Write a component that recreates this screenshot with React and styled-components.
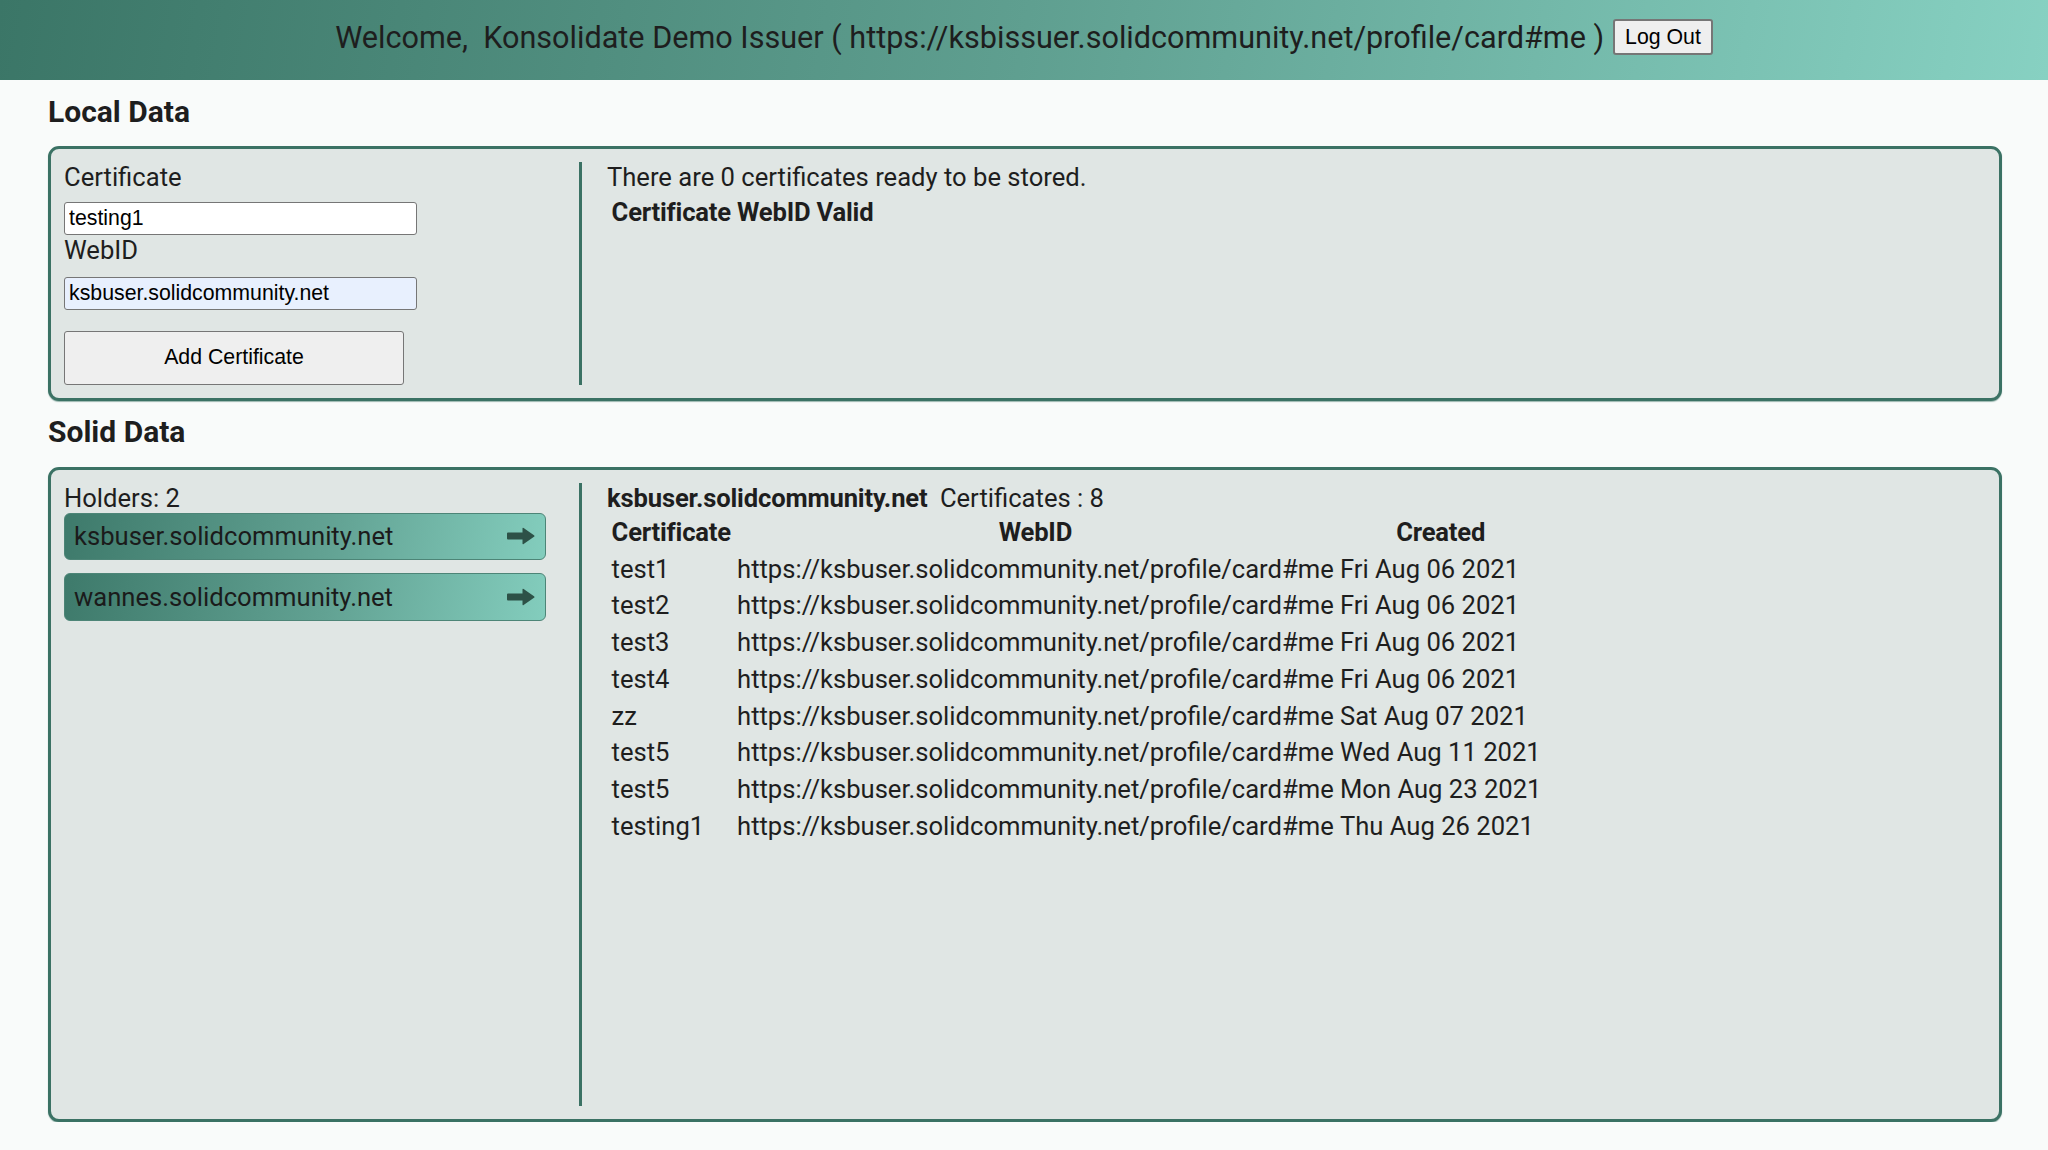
import React from "react";
import styled, { createGlobalStyle } from "styled-components";

const GlobalStyle = createGlobalStyle`
  body {
    margin: 0;
    background: #f9fbfa;
    color: #1e1e1e;
    font-family: Roboto, "Noto Sans", sans-serif;
    font-size: 25.6px;
  }
`;

const Header = styled.header`
  height: 80px;
  box-sizing: border-box;
  padding-bottom: 6px;
  display: flex;
  align-items: center;
  justify-content: center;
  gap: 9px;
  background: linear-gradient(100deg, #3b7667 0%, #5f9f90 50%, #87d1c2 100%);
`;

const Welcome = styled.span`
  font-size: 30.6px;
  white-space: pre;
`;

const NativeButton = styled.button`
  font-family: "Liberation Sans", Arial, sans-serif;
  font-size: 21.3px;
  color: #000;
  background: #efefef;
  border: 1.6px solid #767676;
  border-radius: 3px;
  box-sizing: border-box;
  cursor: pointer;
`;

const LogOut = styled(NativeButton)`
  height: 36px;
  padding: 0 10px;
  border-width: 2px;
`;

const Main = styled.main`
  padding: 0 46px 0 48px;
`;

const SectionTitle = styled.h3`
  margin: 13.5px 0 17.5px;
  font-size: 30px;
  line-height: 35px;
  font-weight: 700;
`;

const Panel = styled.section`
  display: flex;
  box-sizing: border-box;
  height: ${(p) => (p.$height ? `${p.$height}px` : "auto")};
  padding: 13px;
  background: #e0e6e4;
  border: 3px solid #3b7264;
  border-radius: 11px;
  box-shadow: 0 1px 1px rgba(59, 114, 100, 0.5);
`;

const LeftCol = styled.div`
  flex: 0 0 515px;
  border-right: 3px solid #3b7264;
`;

const RightCol = styled.div`
  flex: 1;
  padding-left: 25px;
`;

const Line = styled.div`
  line-height: 30px;
`;

const TextInput = styled.input`
  display: block;
  margin-top: ${(p) => p.$gap}px;
  width: 353px;
  height: 33px;
  box-sizing: border-box;
  padding: 1px 4px;
  font-family: "Liberation Sans", Arial, sans-serif;
  font-size: 21.3px;
  color: #000;
  background: ${(p) => (p.$filled ? "#e8f0fe" : "#fff")};
  border: 1.6px solid #767676;
  border-radius: 3px;
`;

const AddButton = styled(NativeButton)`
  display: block;
  margin-top: 21px;
  width: 340px;
  height: 54px;
`;

const Table = styled.table`
  border-spacing: 3.2px;
  font-size: 25.6px;
  color: #1e1e1e;

  th,
  td {
    padding: 1.6px;
    line-height: 30.5px;
    white-space: nowrap;
  }

  th {
    font-weight: 700;
    letter-spacing: -0.2px;
  }

  td {
    text-align: left;
  }
`;

const HolderList = styled.div`
  display: flex;
  flex-direction: column;
  gap: 13px;
  width: 482px;
`;

const HolderButton = styled.div`
  display: flex;
  align-items: center;
  justify-content: space-between;
  height: 47.5px;
  box-sizing: border-box;
  padding: 0 10px 0 9px;
  border: 1px solid #4d8577;
  border-radius: 6px;
  background: linear-gradient(100deg, #3e7a6b 0%, #62a293 55%, #83cdbd 100%);
  color: #1b1b1b;
  cursor: pointer;
`;

const ArrowIcon = styled.svg`
  width: 28px;
  height: 18px;
  flex: 0 0 auto;
  fill: #2d5147;
`;

const Arrow = () => (
  <ArrowIcon viewBox="0 0 28 18">
    <path d="M1 5.6 H15.5 V1.6 Q15.5 0.4 16.6 1 L27 8.2 Q28 9 27 9.8 L16.6 17 Q15.5 17.6 15.5 16.4 V12.4 H1 Q0 12.4 0 11.4 V6.6 Q0 5.6 1 5.6 Z" />
  </ArrowIcon>
);

const Bold = styled.span`
  font-weight: 700;
  letter-spacing: -0.15px;
  margin-right: 6px;
`;

const holders = ["ksbuser.solidcommunity.net", "wannes.solidcommunity.net"];

const webId = "https://ksbuser.solidcommunity.net/profile/card#me";

const certificates = [
  ["test1", "Fri Aug 06 2021"],
  ["test2", "Fri Aug 06 2021"],
  ["test3", "Fri Aug 06 2021"],
  ["test4", "Fri Aug 06 2021"],
  ["zz", "Sat Aug 07 2021"],
  ["test5", "Wed Aug 11 2021"],
  ["test5", "Mon Aug 23 2021"],
  ["testing1", "Thu Aug 26 2021"],
];

export default function App() {
  return (
    <>
      <GlobalStyle />
      <Header>
        <Welcome>
          {"Welcome,  Konsolidate Demo Issuer ( https://ksbissuer.solidcommunity.net/profile/card#me )"}
        </Welcome>
        <LogOut type="button">Log Out</LogOut>
      </Header>
      <Main>
        <SectionTitle>Local Data</SectionTitle>
        <Panel>
          <LeftCol>
            <Line>Certificate</Line>
            <TextInput $gap={9.5} defaultValue="testing1" />
            <Line>WebID</Line>
            <TextInput $gap={12} $filled defaultValue="ksbuser.solidcommunity.net" />
            <AddButton type="button">Add Certificate</AddButton>
          </LeftCol>
          <RightCol>
            <Line>There are 0 certificates ready to be stored.</Line>
            <Table>
              <thead>
                <tr>
                  <th>Certificate</th>
                  <th>WebID</th>
                  <th>Valid</th>
                </tr>
              </thead>
            </Table>
          </RightCol>
        </Panel>

        <SectionTitle>Solid Data</SectionTitle>
        <Panel $height={655}>
          <LeftCol>
            <Line>Holders: 2</Line>
            <HolderList>
              {holders.map((h) => (
                <HolderButton key={h}>
                  <span>{h}</span>
                  <Arrow />
                </HolderButton>
              ))}
            </HolderList>
          </LeftCol>
          <RightCol>
            <Line>
              <Bold>ksbuser.solidcommunity.net</Bold> Certificates : 8
            </Line>
            <Table>
              <thead>
                <tr>
                  <th>Certificate</th>
                  <th>WebID</th>
                  <th>Created</th>
                </tr>
              </thead>
              <tbody>
                {certificates.map(([name, date], i) => (
                  <tr key={i}>
                    <td>{name}</td>
                    <td>{webId}</td>
                    <td>{date}</td>
                  </tr>
                ))}
              </tbody>
            </Table>
          </RightCol>
        </Panel>
      </Main>
    </>
  );
}
